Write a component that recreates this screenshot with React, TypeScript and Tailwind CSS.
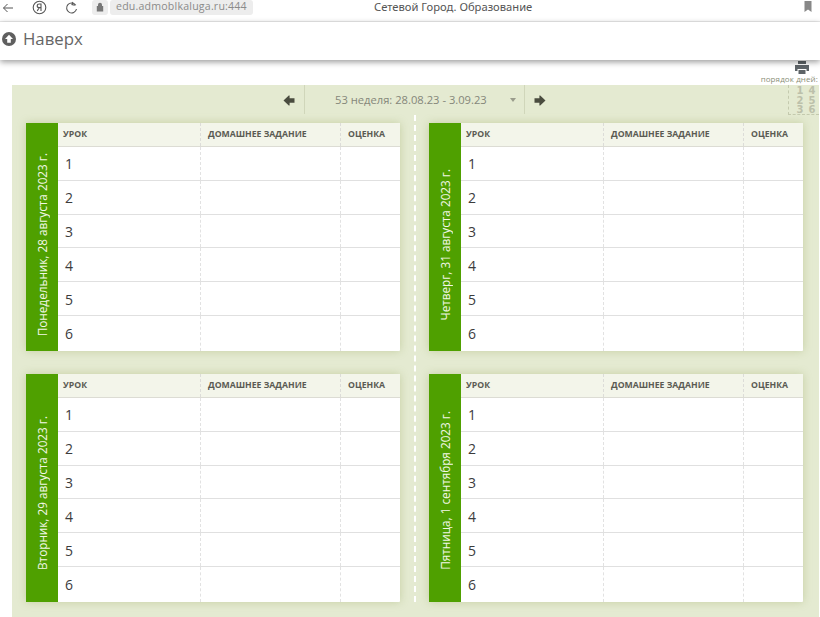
import React from "react";

const font = { fontFamily: '"Open Sans", sans-serif' };

function Fat({ dir }: { dir: "l" | "r" }) {
  return (
    <svg width="12" height="11" viewBox="0 0 12 11" className={dir === "r" ? "rotate-180" : ""}>
      <path d="M0.5 5.5 L5.8 0.5 L6.6 0.5 L6.6 3.2 L11.5 3.2 L11.5 7.8 L6.6 7.8 L6.6 10.5 L5.8 10.5 Z" fill="#4a4c3f" />
    </svg>
  );
}

function Day({ title, offset }: { title: string; offset: string }) {
  return (
    <div className="flex h-[228px] w-[374px] rounded-[1px] bg-white shadow-[0_0_8px_rgba(150,165,90,0.4)]">
      <div className={`flex w-[32px] shrink-0 items-center justify-center bg-[#4fa000] ${offset}`}>
        <span className="rotate-180 whitespace-nowrap text-[11.75px] leading-[16px] text-[#f2f7e6] [writing-mode:vertical-rl]">{title}</span>
      </div>
      <div className="flex min-w-0 flex-1 flex-col">
        <div className="flex h-[24px] shrink-0 items-center border-b border-[#dcdcd4] bg-[#f3f5ea] text-[8.7px] font-bold uppercase text-[#5a5b53]">
          <div className="flex h-full w-[142px] items-center pl-[5px]">Урок</div>
          <div className="flex h-full w-[140px] items-center border-l border-dashed border-[#dcdcd8] pl-[7px]">Домашнее задание</div>
          <div className="flex h-full flex-1 items-center border-l border-dashed border-[#dcdcd8] pl-[7px]">Оценка</div>
        </div>
        {[1, 2, 3, 4, 5, 6].map((n) => (
          <div key={n} className="flex h-[33.8px] shrink-0 border-b border-[#e0e0e0] text-[14px] text-[#3c3c3c] last:flex-1 last:border-b-0">
            <div className="flex w-[142px] items-center pl-[7px] pt-[1px] last:pt-0">{n}</div>
            <div className="w-[140px] border-l border-dashed border-[#e2e2e2]" />
            <div className="flex-1 border-l border-dashed border-[#e2e2e2]" />
          </div>
        ))}
      </div>
    </div>
  );
}

export default function App() {
  return (
    <div className="relative flex h-[617px] w-[820px] flex-col overflow-hidden bg-white" style={font}>
      <div className="flex h-[22px] shrink-0 items-center border-b border-[#ececec] text-[#5a5a5a]">
        <svg width="12" height="12" viewBox="0 0 12 12" className="ml-[2px] mt-[-5px]" fill="none" stroke="#555" strokeWidth="1">
          <path d="M11 6H1.5M5.5 2L1.5 6L5.5 10" />
        </svg>
        <svg width="15" height="15" viewBox="0 0 15 15" className="ml-[18px] mt-[-6px]" fill="none" stroke="#555" strokeWidth="1.1">
          <circle cx="7.5" cy="7.5" r="6.3" />
          <path d="M9 11V4H7.3C5.8 4 5.2 4.9 5.2 5.9C5.2 6.9 5.9 7.6 7.3 7.6H9M7.2 7.6L5.2 11" />
        </svg>
        <svg width="13" height="14" viewBox="0 0 13 14" className="ml-[18px] mt-[-6px]" fill="none" stroke="#555" strokeWidth="1.1">
          <path d="M10.8 4.2A5 5 0 1 0 11.5 8M8 1L7 3.5L9.8 4.2" />
        </svg>
        <div className="ml-[14px] mt-[-7px] flex h-[15px] w-[16px] items-center justify-center rounded-[3px] bg-[#ededed]">
          <svg width="8" height="10" viewBox="0 0 8 10">
            <path d="M2 4V2.8a2 2 0 0 1 4 0V4h1.2v5.6H.8V4z" fill="#777" />
          </svg>
        </div>
        <div className="ml-[2px] mt-[-7px] flex h-[15px] w-[143px] items-center rounded-[3px] bg-[#ededed] pl-[6px] text-[10.6px] tracking-[0.2px] text-[#8a8a8a]">
          edu.admoblkaluga.ru:444
        </div>
        <div className="ml-[121px] mt-[-7px] w-[220px] whitespace-nowrap text-[11.2px] text-[#555]" style={{ fontFamily: '"Noto Sans", sans-serif' }}>
          Сетевой Город. Образование
        </div>
        <svg width="8" height="11" viewBox="0 0 8 11" className="ml-auto mr-[8px] mt-[-8px]">
          <path d="M0.5 0H7.5V11L4 8.5L0.5 11Z" fill="#888" />
        </svg>
      </div>

      <div className="z-10 flex h-[38px] shrink-0 items-center bg-white pb-[4px] shadow-[0_2px_6px_rgba(0,0,0,0.4)]">
        <svg width="14" height="14" viewBox="0 0 14 14" className="ml-[2px]">
          <circle cx="7" cy="7" r="7" fill="#5f5f5f" />
          <path d="M7 2.8L11 7H8.8V10.8H5.2V7H3Z" fill="#fff" />
        </svg>
        <span className="ml-[7px] text-[16.8px] leading-none text-[#666]">Наверх</span>
      </div>

      <div className="flex h-[25px] shrink-0 flex-col items-end pr-[2px]">
        <svg width="14" height="13" viewBox="0 0 14 13" className="mr-[9px] mt-[1px]">
          <path d="M3 0H11V3H3ZM0 4H14V10H11.5V8H2.5V10H0ZM3.5 9H10.5V13H3.5Z" fill="#5e6468" />
        </svg>
        <span className="text-[8px] leading-[9px] tracking-[0.1px] text-[#8a8f78]">порядок дней:</span>
      </div>

      <div className="ml-[12px] mr-[1px] flex min-h-0 flex-1 flex-col bg-[#e4ead1]">
        <div className="relative flex h-[38px] shrink-0">
          <div className="ml-[271px] flex h-[30px] w-[21px] items-center"><Fat dir="l" /></div>
          <div className="flex h-[29px] w-[221px] items-center border-x border-[#d0d6ba]">
            <span className="ml-[30px] whitespace-nowrap pt-[1px] text-[11.2px] text-[#85877a]">53 неделя: 28.08.23 - 3.09.23</span>
            <span className="ml-[23px] h-0 w-0 border-x-[3px] border-t-[4px] border-x-transparent border-t-[#9a9c8c]" />
          </div>
          <div className="ml-[9px] flex h-[30px] items-center"><Fat dir="r" /></div>
          <div className="absolute right-0 top-0 grid h-[30px] w-[31px] grid-cols-2 content-start border-b border-l border-dashed border-[#c4caae] pr-[1px] pl-[5px] pt-[1px] text-center text-[10px] font-bold leading-[9.5px] text-[#bcc0aa]" style={{ fontFamily: '"DejaVu Sans", sans-serif' }}>
            <span>1</span><span>4</span><span>2</span><span>5</span><span>3</span><span>6</span>
          </div>
        </div>

        <div className="flex pl-[14px]">
          <div className="flex flex-col gap-[23px]">
            <Day title="Понедельник, 28 августа 2023 г." offset="pt-[16px]" />
            <Day title="Вторник, 29 августа 2023 г." offset="pt-[10px]" />
          </div>
          <div className="-mt-[8px] flex w-[29px] justify-center">
            <div className="h-full w-0 border-l-[2px] border-dashed border-white" />
          </div>
          <div className="flex flex-col gap-[23px]">
            <Day title="Четверг, 31 августа 2023 г." offset="pt-[16px]" />
            <Day title="Пятница, 1 сентября 2023 г." offset="pt-[4px]" />
          </div>
        </div>
      </div>
    </div>
  );
}
